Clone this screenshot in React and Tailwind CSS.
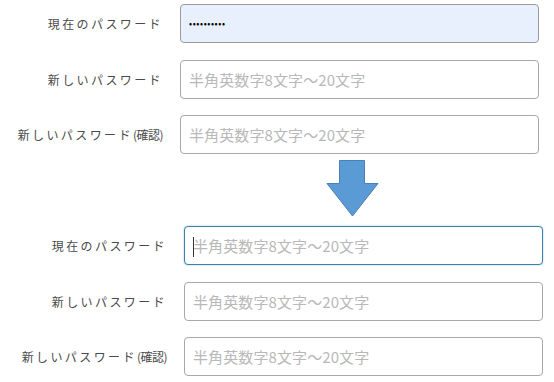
const FONT = { fontFamily: '"Noto Sans CJK JP", "Liberation Sans", sans-serif' };

function Label({ text, suffix }) {
  return (
    <span className="text-[12px] tracking-[2.4px] text-[#4a4a4a] text-right whitespace-nowrap">
      {text}
      {suffix && <span className="tracking-[-0.5px]">{suffix}</span>}
    </span>
  );
}

function Row({ label, suffix, labelWidth, gap, filled, focused, top }) {
  return (
    <div className="flex items-center" style={{ marginTop: top }}>
      <div className="flex justify-end" style={{ width: labelWidth }}>
        <Label text={label} suffix={suffix} />
      </div>
      <div
        className={`relative h-[39px] w-[359px] rounded-[4px] border flex items-center px-[8px] ${
          filled ? 'bg-[#e8f0fe] border-[#9a9a9a]' : 'bg-white'
        } ${focused ? 'border-[#3f7fae] shadow-[0_0_2px_#8fc3e6]' : filled ? '' : 'border-[#a8a8a8]'}`}
        style={{ marginLeft: gap }}
      >
        {filled ? (
          <span className="text-[9px] tracking-[0.6px] text-black leading-none">••••••••••</span>
        ) : (
          <span className="text-[15px] text-[#b8b8b8] leading-none tracking-[0.1px]">
            半角英数字8文字～20文字
          </span>
        )}
        {focused && <span className="absolute left-[8px] top-[10px] h-[20px] w-px bg-[#333]" />}
      </div>
    </div>
  );
}

export default function App() {
  return (
    <div className="w-[554px] h-[382px] bg-white relative overflow-hidden" style={FONT}>
      <div className="pt-[4px]">
        <Row label="現在のパスワード" labelWidth={163} gap={17} filled />
        <Row label="新しいパスワード" labelWidth={163} gap={17} top={17} />
        <Row label="新しいパスワード" suffix="(確認)" labelWidth={163} gap={17} top={16} />
      </div>

      <div className="flex pl-[326px] mt-[6px]">
        <svg width="53" height="57" viewBox="0 0 53 57">
          <polygon
            points="13.5,0.5 38.5,0.5 38.5,23.5 52,23.5 26.5,56 1,23.5 13.5,23.5"
            fill="#5b9bd5"
            stroke="#4a80b8"
            strokeWidth="1"
          />
        </svg>
      </div>

      <div className="mt-[9px]">
        <Row label="現在のパスワード" labelWidth={167} gap={17} focused />
        <Row label="新しいパスワード" labelWidth={167} gap={17} top={17} />
        <Row label="新しいパスワード" suffix="(確認)" labelWidth={167} gap={17} top={16} />
      </div>
    </div>
  );
}
